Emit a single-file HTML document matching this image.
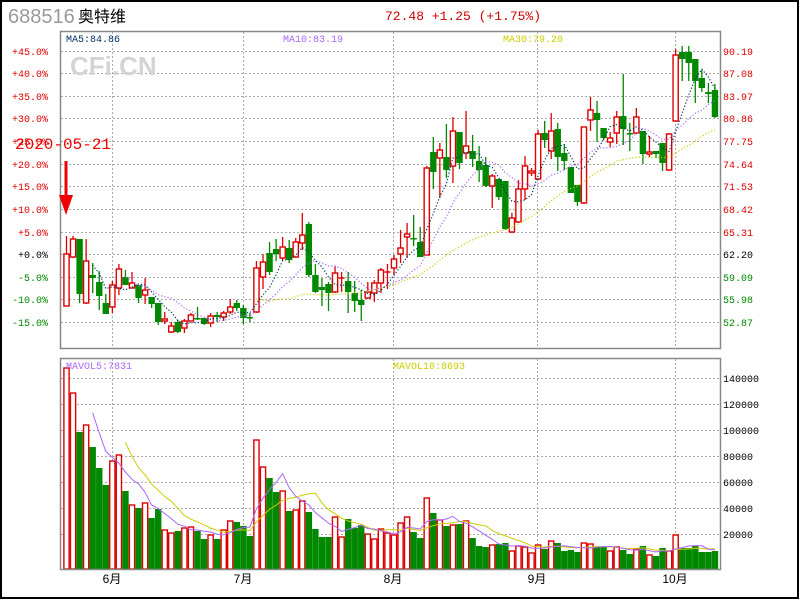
<!DOCTYPE html>
<html><head><meta charset="utf-8">
<style>
html,body{margin:0;padding:0;background:#fff;}
#wrap{position:relative;width:800px;height:600px;overflow:hidden;background:#fff;}
svg{position:absolute;left:0;top:0;}
text{font-family:"Liberation Mono",monospace;}
</style></head>
<body><div id="wrap">
<svg id="s" width="800" height="600" viewBox="0 0 800 600" xmlns="http://www.w3.org/2000/svg">
<rect x="1" y="1" width="797" height="597" fill="#fff" stroke="#000" stroke-width="2"/>
<text x="8" y="23" font-family="Liberation Sans, sans-serif" font-size="20" fill="#999" style="font-family:'Liberation Sans',sans-serif">688516</text>
<text x="78" y="22" font-size="16" fill="#000" style="font-family:'Liberation Sans','Noto Sans CJK SC',sans-serif">奥特维</text>
<text x="385" y="20" font-size="13" fill="#c00">72.48 +1.25 (+1.75%)</text>
<g id="grid"></g>
<text x="70" y="75" font-size="26" font-weight="bold" fill="#d4d4d4" style="font-family:'Liberation Sans',sans-serif">CFi.CN</text>
<g id="chart"></g>
<rect x="60.5" y="31.5" width="660" height="317" fill="none" stroke="#888" stroke-width="1.5"/>
<rect x="60.5" y="358.5" width="660" height="211" fill="none" stroke="#888" stroke-width="1.5"/>
<text x="66" y="42" font-size="10" fill="#036">MA5:84.86</text>
<text x="283" y="42" font-size="10" fill="#a6f">MA10:83.19</text>
<text x="503" y="42" font-size="10" fill="#cc0">MA30:79.20</text>
<text x="66" y="369" font-size="10" fill="#a6f">MAVOL5:7831</text>
<text x="393" y="369" font-size="10" fill="#cc0">MAVOL10:8693</text>
<g id="labels"></g>
<text x="15" y="149" font-size="16" fill="#e00">2020-05-21</text>
<rect x="64.5" y="161" width="3" height="36" fill="#e00"/>
<polygon points="59,195 73,195 66,215" fill="#e00"/>
</svg>
</div>
<script>
var C=[[306,254,236,306],[257,239,236,258],[239,294,239,303],[303,261,239,304],[275,278,263,293],[282,296,271,310],[303,314,294,314],[307,285,281,313],[288,269,264,295],[277,285,270,285],
[288,283,272,288],[285,298,285,303],[295,290,278,304],[297,304,297,308],[303,322,303,325],[321,319,312,324],[332,326,322,333],[322,332,320,333],[328,321,319,333],[321,315,313,321],
[318,319,307,320],[318,324,318,325],[323,316,313,327],[315,317,312,322],[317,313,311,321],[312,307,299,314],[303,308,300,311],[308,318,305,324],[317,318,313,322],[312,268,261,313],
[277,262,254,289],[253,272,242,275],[249,254,239,261],[258,247,237,261],[248,260,240,263],[257,242,238,258],[243,235,213,250],[224,275,222,277],[275,292,264,293],[287,290,278,306],
[284,293,282,311],[292,273,266,293],[278,278,272,292],[281,292,272,313],[293,301,281,312],[300,305,290,321],[298,292,282,299],[293,283,280,302],[283,270,268,293],[272,272,264,289],
[268,259,255,275],[254,248,230,263],[237,234,223,258],[238,238,215,246],[242,257,227,257],[255,168,166,255],[152,172,137,189],[158,150,143,198],[157,170,124,178],[166,131,117,183],
[132,163,132,169],[153,146,111,159],[151,159,135,167],[161,170,146,182],[165,186,157,187],[186,176,174,208],[179,197,179,200],[181,229,181,230],[232,218,213,233],[222,189,180,223],
[189,166,156,200],[173,171,168,176],[179,134,130,180],[133,140,121,148],[151,131,113,159],[129,157,123,171],[153,161,144,170],[167,193,167,193],[185,202,185,206],[203,127,127,204],
[120,110,97,131],[113,120,101,142],[128,138,128,140],[142,138,132,147],[133,117,111,144],[116,129,74,145],[133,133,123,151],[133,117,108,134],[131,154,131,164],[154,152,136,157],
[151,154,151,158],[143,163,143,171],[170,134,133,171],[121,55,49,122],[52,59,46,81],[52,63,46,81],[59,81,59,103],[78,88,70,92],[92,94,83,103],[90,117,84,118]];
var V=[368,393,432,425,447,468,485,461,455,491,505,508,503,518,509,530,533,531,528,527,531,539,535,539,530,521,522,526,536,440,467,478,492,491,511,510,501,512,529,537,537,517,537,519,528,525,534,539,529,533,535,523,517,532,538,498,513,520,526,525,524,521,538,546,547,545,544,543,551,546,547,553,545,549,541,543,551,550,552,543,544,547,547,551,547,550,554,549,546,555,556,548,551,535,548,548,546,552,552,551];
var NS='http://www.w3.org/2000/svg';
function el(p,t,a,txt){var e=document.createElementNS(NS,t);for(var k in a)e.setAttribute(k,a[k]);if(txt!==undefined)e.textContent=txt;p.appendChild(e);return e;}
var g=document.getElementById('grid'),ch=document.getElementById('chart'),lb=document.getElementById('labels');
var py=[51,73,96,118,141,164,186,209,232,254,277,299,322];
var pl=['+45.0%','+40.0%','+35.0%','+30.0%','+25.0%','+20.0%','+15.0%','+10.0%','+5.0%','+0.0%','-5.0%','-10.0%','-15.0%'];
var pr=['90.19','87.08','83.97','80.86','77.75','74.64','71.53','68.42','65.31','62.20','59.09','55.98','52.87'];
var ds={stroke:'#aaa','stroke-width':1,'stroke-dasharray':'2,2'};
py.forEach(function(y,i){
 var a=Object.assign({x1:61,x2:720,y1:y+.5,y2:y+.5},ds);el(g,'line',a);
 var col=i<9?'#d00':(i==9?'#000':'#080');
 el(lb,'text',{x:48,y:y+4,'font-size':10,fill:col,'text-anchor':'end'},pl[i]);
 el(lb,'text',{x:723,y:y+4,'font-size':10,fill:col},pr[i]);
});
var vy=[378,404,430,456,482,508,534],vl=['140000','120000','100000','80000','60000','40000','20000'];
vy.forEach(function(y,i){el(g,'line',Object.assign({x1:61,x2:720,y1:y+.5,y2:y+.5},ds));
 el(lb,'text',{x:723,y:y+4,'font-size':10,fill:'#000'},vl[i]);});
[[112,'6月'],[243,'7月'],[393,'8月'],[537,'9月'],[675,'10月']].forEach(function(m){
 el(g,'line',Object.assign({x1:m[0]+.5,x2:m[0]+.5,y1:32,y2:348},ds));
 el(g,'line',Object.assign({x1:m[0]+.5,x2:m[0]+.5,y1:359,y2:569},ds));
 el(lb,'text',{x:m[0],y:583,'font-size':12,fill:'#000','text-anchor':'middle',style:"font-family:'Liberation Sans','Noto Sans CJK SC',sans-serif"},m[1]);
});
var X=function(i){return 66.5+i*6.55;};
var R='#d00',G='#080';
C.forEach(function(c,i){
 var x=X(i),o=c[0],cl=c[1],h=c[2],l=c[3];
 var top=Math.min(o,cl),bot=Math.max(o,cl);
 if(cl<o||(cl==o&&(i==42||i==49))){ // red up
  el(ch,'line',{x1:x,x2:x,y1:h,y2:top,stroke:R,'stroke-width':1.3});
  el(ch,'line',{x1:x,x2:x,y1:bot,y2:l,stroke:R,'stroke-width':1.3});
  if(bot-top<1.5) el(ch,'line',{x1:x-3,x2:x+3,y1:top,y2:top,stroke:R,'stroke-width':1.5});
  else el(ch,'rect',{x:x-2.6,y:top,width:5.2,height:bot-top,fill:'#fff',stroke:R,'stroke-width':1.4});
 } else {
  el(ch,'line',{x1:x,x2:x,y1:h,y2:l,stroke:G,'stroke-width':1.3});
  el(ch,'rect',{x:x-3.2,y:top,width:6.4,height:Math.max(bot-top,1.5),fill:G});
 }
});
function ma(arr,n){var r=[];for(var i=n-1;i<arr.length;i++){var s=0;for(var j=0;j<n;j++)s+=arr[i-j];r.push([X(i),s/n]);}return r;}
function pts(a){return a.map(function(p){return p[0].toFixed(1)+','+p[1].toFixed(1);}).join(' ');}
var cls=C.map(function(c){return c[1];});
el(ch,'polyline',{points:pts(ma(cls,30)),fill:'none',stroke:'#cc0','stroke-width':1.2,'stroke-dasharray':'1.2,2'});
el(ch,'polyline',{points:pts(ma(cls,10)),fill:'none',stroke:'#a6f','stroke-width':1.2,'stroke-dasharray':'1.2,2'});
el(ch,'polyline',{points:pts(ma(cls,5)),fill:'none',stroke:'#036','stroke-width':1.2,'stroke-dasharray':'1.2,2'});
V.forEach(function(v,i){
 var c=C[i],x=X(i),red=(c[1]<c[0]||i==42||i==49);
 if(red) el(ch,'rect',{x:x-2.6,y:v,width:5.2,height:569-v,fill:'#fff',stroke:R,'stroke-width':1.4});
 else el(ch,'rect',{x:x-3.2,y:v,width:6.4,height:569-v,fill:G});
});
el(ch,'polyline',{points:pts(ma(V,10)),fill:'none',stroke:'#cc0','stroke-width':1});
el(ch,'polyline',{points:pts(ma(V,5)),fill:'none',stroke:'#a6f','stroke-width':1});
</script>
</body></html>
